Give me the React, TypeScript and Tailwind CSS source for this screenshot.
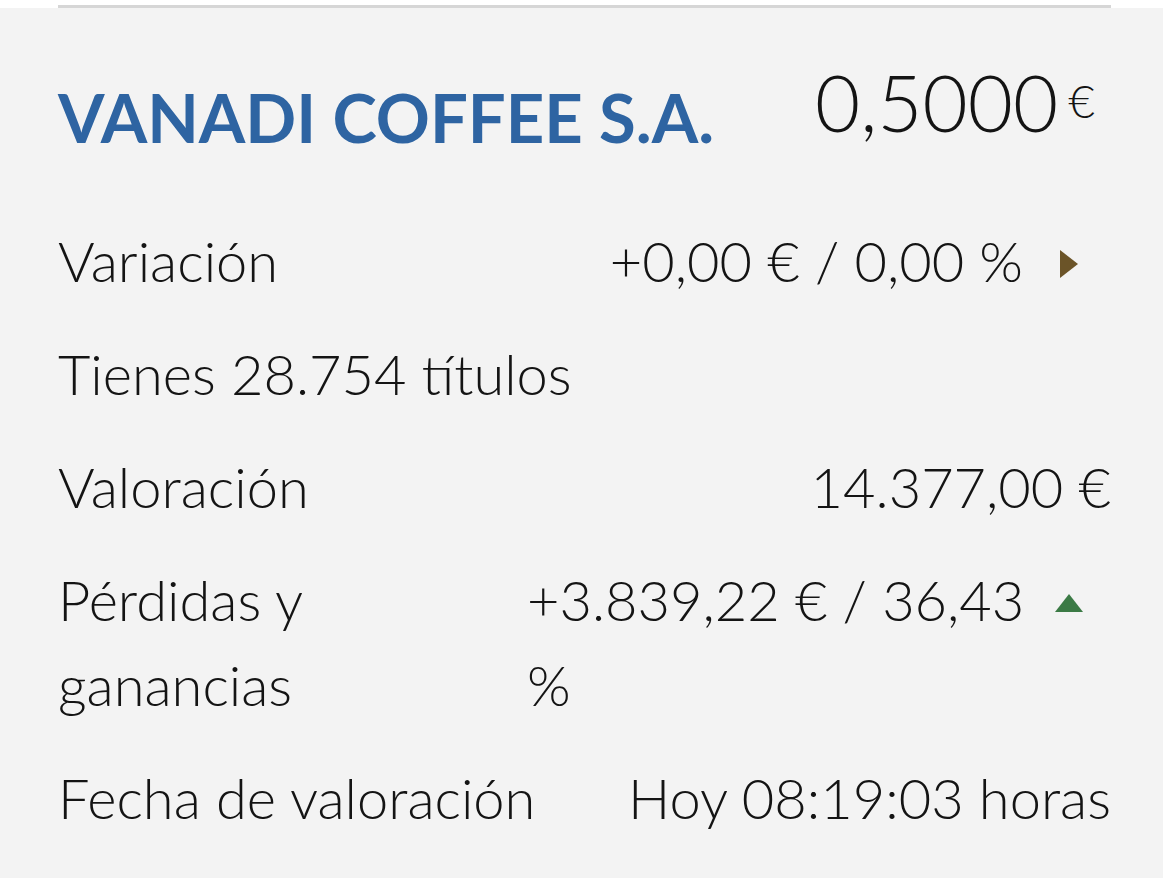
import React from 'react';

type Trend = 'flat' | 'up';

function TrendMark({ trend }: { trend: Trend }) {
  if (trend === 'up') {
    return (
      <svg width="28" height="18" viewBox="0 0 28 18" className="mt-[37px]">
        <polygon points="14,0 28,18 0,18" fill="#3b7a45" />
      </svg>
    );
  }
  return (
    <svg width="18" height="28" viewBox="0 0 18 28" className="mt-[32px]">
      <polygon points="0,0 18,14 0,28" fill="#6b5428" />
    </svg>
  );
}

function Row({
  label,
  children,
  labelClass = '',
}: {
  label: string;
  children: React.ReactNode;
  labelClass?: string;
}) {
  return (
    <div className="flex justify-between items-start">
      <div className={labelClass}>{label}</div>
      {children}
    </div>
  );
}

export default function App() {
  return (
    <div
      className="min-h-screen bg-[#f3f3f3] text-[#141414]"
      style={{ fontFamily: 'Lato, "Open Sans", sans-serif' }}
    >
      <div className="bg-white pt-[5px]">
        <div className="ml-[58px] mr-[52px] h-[3px] bg-[#d6d6d6]" />
      </div>

      <div className="pl-[58px] pr-[52px]">
        {/* cabecera: nombre del valor y cotización */}
        <div className="flex justify-between items-start pt-[54px]">
          <h1 className="mt-[15px] text-[67px] leading-[80px] font-bold text-[#2e64a2]">
            VANADI COFFEE S.A.
          </h1>
          <div className="flex items-start pr-[16px]">
            <span className="text-[78px] leading-[80px] font-light">0,5000</span>
            <span className="ml-[10px] mt-[14px] text-[46px] leading-[50px] font-light">€</span>
          </div>
        </div>

        <div className="mt-[61px] flex flex-col gap-[28px] text-[56px] leading-[85px] font-light">
          <Row label="Variación">
            <div className="flex items-start">
              <span>+0,00 € / 0,00 %</span>
              <div className="w-[84px] ml-[4px] flex justify-center">
                <TrendMark trend="flat" />
              </div>
            </div>
          </Row>

          <div>Tienes 28.754 títulos</div>

          <Row label="Valoración">
            <span>14.377,00 €</span>
          </Row>

          <Row label="Pérdidas y ganancias" labelClass="w-[320px]">
            <div className="flex items-start">
              <span className="w-[512px]">+3.839,22 € / 36,43 %</span>
              <div className="w-[72px] pl-[16px] flex">
                <TrendMark trend="up" />
              </div>
            </div>
          </Row>

          <Row label="Fecha de valoración">
            <span>Hoy 08:19:03 horas</span>
          </Row>
        </div>
      </div>
    </div>
  );
}
